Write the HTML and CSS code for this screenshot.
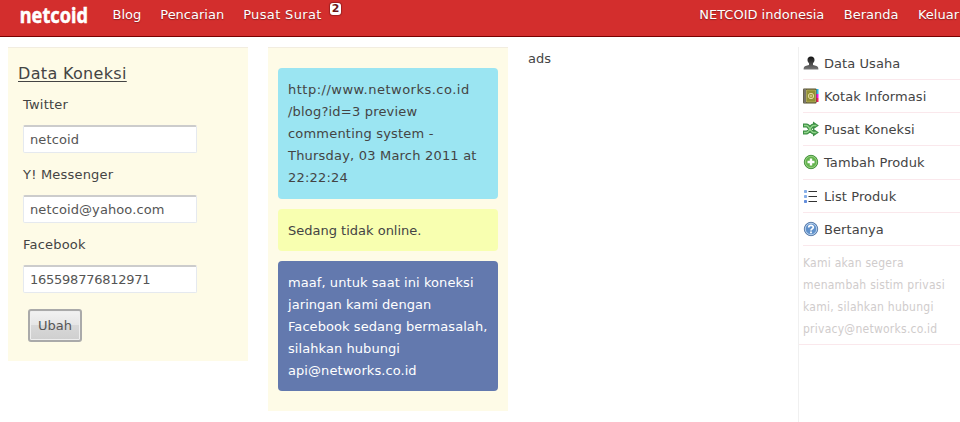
FILE: index.html
```html
<!DOCTYPE html>
<html lang="id">
<head>
<meta charset="utf-8">
<title>netcoid</title>
<link rel="stylesheet" href="styles.css">
</head>
<body>
<header class="topbar">
  <div class="logo">netcoid</div>
  <nav class="nav">
    <a>Blog</a><a>Pencarian</a><a class="mail">Pusat Surat<span class="badge">2</span></a>
  </nav>
  <nav class="nav account"><a>NETCOID indonesia</a><a>Beranda</a><a>Keluar</a></nav>
</header>
<main class="columns">
  <form class="panel form">
    <h2>Data Koneksi</h2>
    <label for="tw">Twitter</label><input id="tw" value="netcoid">
    <label for="ym">Y! Messenger</label><input id="ym" value="netcoid@yahoo.com">
    <label for="fb">Facebook</label><input id="fb" value="165598776812971">
    <button type="button">Ubah</button>
  </form>
  <section class="panel feed">
    <p class="note twitter"><span class="url">http://www.networks.co.id</span><br>/blog?id=3 preview<br>commenting system -<br>Thursday, 03 March 2011 at<br>22:22:24</p>
    <p class="note yahoo">Sedang tidak online.</p>
    <p class="note facebook">maaf, untuk saat ini koneksi<br>jaringan kami dengan<br>Facebook sedang bermasalah,<br>silahkan hubungi<br>api@networks.co.id</p>
  </section>
  <section class="ads">ads</section>
  <aside class="sidebar">
    <ul>
      <li><svg viewBox="0 0 16 16"><defs><linearGradient id="person" x2="0" y2="1"><stop stop-color="#111"/><stop offset="1" stop-color="#777"/></linearGradient></defs><path fill="url(#person)" d="M8 1.500c2.300 0 3.500 1.300 3.500 3.300 0 1.700-.6 2.700-1.500 3.500v1.600l3.500 1.200c1.200.4 1.900 1.300 1.900 3.400H.6c0-2.100.7-3 1.900-3.400L6 9.900V8.300C5.100 7.500 4.500 6.500 4.500 4.800 4.500 2.800 5.700 1.500 8 1.500z"/></svg><span>Data Usaha</span></li>
      <li><svg viewBox="0 0 16 16"><path fill="#28b9ee" d="M13 1h2.500v5H13z"/><path fill="#f016dc" d="M13 6h2.500v4H13z"/><path fill="#ed2058" d="M13 10h2.500v4H13z"/><rect x="0" y=".5" width="13.500" height="15" rx="1" fill="#55502c"/><path fill="#77736b" d="M.5 1H3v14H.5z"/><path fill="#929034" stroke="#c0bc6b" stroke-width=".7" d="M3.500 2h9v12h-9z"/><circle cx="8" cy="8" r="2.700" fill="none" stroke="#e6dda0"/><circle cx="8" cy="8" r="1" fill="none" stroke="#e6dda0" stroke-width=".8"/></svg><span>Kotak Informasi</span></li>
      <li><svg viewBox="0 0 16 16"><g fill="none" stroke="#3c8f45" stroke-width="3.800"><path d="M0 4.500h3.500c3 0 4 7 7 7H12M0 11.500h3.500c3 0 4-7 7-7H12"/></g><path fill="#3c8f45" d="M10 .5 15.900 4.500 10 8.500zM10 7.500l5.900 4-5.900 4z"/><g fill="none" stroke="#91d48a" stroke-width="1.500"><path d="M1 4.500h2.500c3 0 4 7 7 7h3M1 11.500h2.500c3 0 4-7 7-7h3"/></g></svg><span>Pusat Koneksi</span></li>
      <li><svg viewBox="0 0 16 16"><circle cx="8" cy="8" r="6.700" fill="#62b34d" stroke="#43923e"/><circle cx="8" cy="8" r="5.700" fill="none" stroke="#a5d68e" stroke-width=".8"/><path fill="#fff" d="M6.800 4.500h2.400v2.300h2.300v2.400H9.200v2.300H6.800V9.200H4.500V6.800h2.300z"/></svg><span>Tambah Produk</span></li>
      <li><svg viewBox="0 0 16 16"><g fill="#86afe9"><rect x="1" y="2" width="3" height="3" rx=".7"/><rect x="1" y="7" width="3" height="3" rx=".7"/><rect x="1" y="12" width="3" height="3" rx=".7" fill="#628ddc"/></g><path fill="#333" d="M5.500 3H14v1H5.500zM5.500 8H14v1H5.500zM5.500 13H14v1H5.500z"/></svg><span>List Produk</span></li>
      <li><svg viewBox="0 0 16 16"><circle cx="8" cy="8" r="6.700" fill="#6091cb" stroke="#5c7ca8"/><circle cx="8" cy="8" r="5.700" fill="none" stroke="#b7d0ec"/><path fill="none" stroke="#fff" stroke-width="1.700" d="M5.700 6.500C5.700 3.600 10.300 3.700 10.300 6.300 10.300 7.900 8 7.900 8 9.500"/><path fill="#fff" d="M7.100 10.500h1.800v1.700H7.100z"/></svg><span>Bertanya</span></li>
    </ul>
    <p class="privacy">Kami akan segera<br>menambah sistim privasi<br>kami, silahkan hubungi<br>privacy@networks.co.id</p>
  </aside>
</main>
</body>
</html>
```
FILE: styles.css
```css
* { box-sizing: border-box; }
body {
  margin: 0;
  height: 422px;
  overflow: hidden;
  background: #fff;
  color: #444;
  font: 13px/22.1px Verdana, "DejaVu Sans", sans-serif;
}
h2, p, ul { margin: 0; padding: 0; }
.topbar {
  display: flex;
  height: 37px;
  padding: 4px 2px 0 19px;
  background: #d32e2d;
  border-bottom: 1px solid #790000;
  color: #fff;
}
.logo {
  flex: none;
  width: 74px;
  height: 30px;
  margin-top: -4px;
  padding-left: 1px;
  font: bold 22px/28px "Noto Sans", sans-serif;
  -webkit-text-stroke: .5px #fff;
  transform: scaleX(.825);
  transform-origin: 0 0;
}
.nav { display: flex; gap: 20px; margin-left: 19.500px; white-space: nowrap; text-shadow: 0 1px 1px #8d2020; }
.nav:not(.account) { gap: 19px; letter-spacing: 0; }
.nav .mail { letter-spacing: .35px; }
.account { margin-left: auto; gap: 19.500px; letter-spacing: 0; }
.account a:last-child { margin-right: -1px; }
.mail { position: relative; }
.badge {
  position: absolute;
  left: 87px;
  top: -1px;
  width: 11px;
  height: 12px;
  border-radius: 3px;
  background: #fff;
  color: #6b1616;
  box-shadow: 0 0 1px 1px #9e2020;
  font: bold 11px/12px "DejaVu Sans", sans-serif;
  letter-spacing: 0;
  text-align: center;
  text-shadow: none;
}
.columns { display: flex; align-items: flex-start; gap: 20px; padding: 10px 0 0 8px; }
.panel { flex: none; width: 240px; background: #fefbe7; border-top: 1px solid #f2ede0; }
.form { height: 314px; padding: 15px 15px 0; display: flex; flex-direction: column; align-items: flex-start; }
.form h2 { margin: 0 0 9px -5px; font-size: 16px; font-weight: normal; line-height: 22px; letter-spacing: .33px; text-decoration: underline; text-underline-offset: 2px; text-decoration-thickness: 1px; }
.form label { height: 22px; line-height: 22px; margin-bottom: 9px; letter-spacing: .2px; }
.form label + input { margin-bottom: 11px; }
.form input {
  width: 174px;
  height: 28px;
  padding: 0 6px;
  border: 1px solid #e5e9ef;
  border-top: 2px solid #ccc;
  border-radius: 2px;
  background: #fff;
  color: #555;
  font: inherit;
  letter-spacing: .1px;
}
.form #fb { letter-spacing: -.25px; }
.form button {
  width: 54px;
  height: 33px;
  margin: 5px 0 0 5px;
  padding: 1px 0 0;
  border: 2px solid #aaa;
  border-radius: 3px;
  background: linear-gradient(#f2f2f2, #e6e6e6 48%, #d8d8d8 50%, #cfcfcf);
  box-shadow: inset 0 0 0 1px #eee;
  color: #555;
  font: inherit;
}
.feed { padding: 20px 10px; }
.note { padding: 11px 10px 9px; border-radius: 4px; white-space: nowrap; }
.note + .note { margin-top: 10px; }
.twitter { height: 131px; background: #9be5f2; letter-spacing: .2px; }
.url { letter-spacing: .5px; }
.yahoo { height: 42px; background: #f8ffb0; }
.facebook { height: 130px; background: #6379ae; color: #fff; letter-spacing: .07px; line-height: 22px; }
.ads { width: 250px; flex: none; padding-top: 1px; }
.sidebar { flex: none; width: 162px; height: 380px; border-left: 1px solid #f0f0f0; }
.sidebar ul { list-style: none; padding-left: 4px; }
.sidebar li { display: flex; align-items: center; gap: 5px; height: 33.150px; border-bottom: 1px solid #fae8ec; white-space: nowrap; letter-spacing: .07px; }
.sidebar li span { padding-top: 2px; }
.sidebar svg { width: 16px; height: 16px; flex: none; }
.privacy { height: 99px; padding: 6px 0 0 4px; border-bottom: 1px solid #fae8ec; color: #d0cccc; font: 12px/22px "DejaVu Sans Condensed", sans-serif; letter-spacing: .25px; white-space: nowrap; }
```
